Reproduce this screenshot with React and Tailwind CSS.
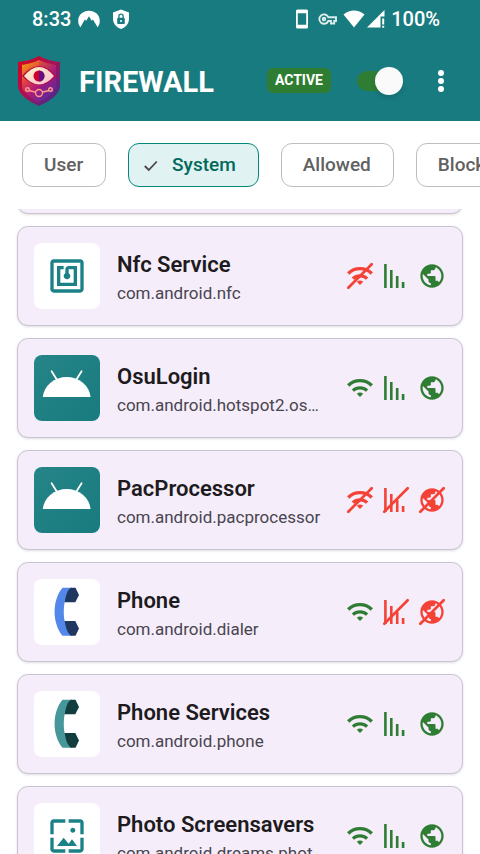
import { useState } from "react";

const APPS = [
  { name: "Nfc Service", pkg: "com.android.nfc", icon: "nfc", wifi: false, data: true, net: true },
  { name: "OsuLogin", pkg: "com.android.hotspot2.osulogin", icon: "android", wifi: true, data: true, net: true },
  { name: "PacProcessor", pkg: "com.android.pacprocessor", icon: "android", wifi: false, data: false, net: false },
  { name: "Phone", pkg: "com.android.dialer", icon: "dialer", wifi: true, data: false, net: false },
  { name: "Phone Services", pkg: "com.android.phone", icon: "phone", wifi: true, data: true, net: true },
  { name: "Photo Screensavers", pkg: "com.android.dreams.phototable", icon: "photo", wifi: true, data: true, net: true },
];

function StatusBar() {
  return (
    <div className="flex h-10 items-center justify-between pr-10 pb-0.5 pl-8 text-[20px] leading-6 font-medium">
      <div className="flex items-center gap-1.5">
        <span>8:33</span>
        <svg className="h-6 w-6" viewBox="0 0 24 24" fill="currentColor" aria-hidden="true">
          <path d="M3.4 20.2C1.9 18.3 1.2 16.2 1.2 14 1.2 8 6 3.8 12 3.8S22.800 8 22.800 14c0 2.200-.7 4.300-2.200 6.200L15.900 12.500l-1.200 1.200.6 1.100L12 9.200 9.100 14l-1.100-1.700z" />
        </svg>
        <svg className="ml-1 h-6 w-5" viewBox="0 0 20 24" aria-hidden="true">
          <path fill="currentColor" d="M10 2.500 18 5.500v6.300c0 4.900-3.400 8.700-8 10.200-4.600-1.500-8-5.300-8-10.200V5.500z" />
          <rect x="6.200" y="10.800" width="7.600" height="6.200" rx="1" fill="#187b7f" />
          <path d="M7.900 11V9.200a2.100 2.100 0 0 1 4.200 0V11" fill="none" stroke="#187b7f" strokeWidth="1.300" />
          <circle cx="10" cy="13.900" r="1" fill="currentColor" />
        </svg>
      </div>
      <div className="flex items-center">
        <svg className="h-6 w-4" viewBox="0 0 16 24" fill="currentColor" fillRule="evenodd" aria-hidden="true">
          <path d="M3.500 2.500h9q1.500 0 1.500 1.500v16q0 1.500-1.500 1.500h-9Q2 21.500 2 20V4q0-1.500 1.500-1.500zM3.800 6.200v11.600h8.400V6.200z" />
        </svg>
        <svg className="ml-2 h-6 w-5" viewBox="0 0 20 24" fill="none" stroke="currentColor" strokeWidth="1.900" strokeOpacity=".85" aria-hidden="true">
          <path d="M10.300 10.200A4.700 4.700 0 1 0 10.300 14H13v2.500h3.200V14H18v-3.800z" />
          <circle cx="6" cy="12.100" r="1.300" />
        </svg>
        <svg className="ml-1 h-6 w-6" viewBox="0 0 24 24" fill="currentColor" aria-hidden="true">
          <path d="M1.500 7.500C7.700 2.200 16.300 2.200 22.500 7.500L12 20.500z" />
        </svg>
        <svg className="h-6 w-5" viewBox="0 0 20 24" fill="currentColor" aria-hidden="true">
          <path d="M18.500 3v6.500h-4V20.500H1zM16.200 11.500h2v6h-2zM16.200 18.800h2v2h-2z" />
        </svg>
        <span className="ml-[5px]">100%</span>
      </div>
    </div>
  );
}

function Logo() {
  return (
    <svg className="h-[50px] w-11 shrink-0" viewBox="0 0 44 50" aria-hidden="true">
      <defs>
        <linearGradient id="rim" x1="0" y1="0" x2="1" y2="1">
          <stop offset="0" stopColor="#d8001c" />
          <stop offset=".45" stopColor="#b01050" />
          <stop offset="1" stopColor="#30309a" />
        </linearGradient>
        <linearGradient id="face" x1=".1" y1="0" x2=".8" y2="1">
          <stop offset="0" stopColor="#f0a010" />
          <stop offset=".3" stopColor="#e8483c" />
          <stop offset=".6" stopColor="#b01878" />
          <stop offset="1" stopColor="#5430a8" />
        </linearGradient>
        <linearGradient id="eye" x1="0" y1="0" x2="1" y2="1">
          <stop offset="0" stopColor="#fff3c4" />
          <stop offset="1" stopColor="#f4c0d4" />
        </linearGradient>
      </defs>
      <path fill="url(#rim)" d="M22 0C15 4 8 5 1 6v24c0 9 12 16 21 20 9-4 21-11 21-20V6C36 5 29 4 22 0z" />
      <path fill="url(#face)" d="M22 4C16 7 10 8 5 9v21c0 6 9 12 17 16 8-4 17-10 17-16V9C34 8 28 7 22 4z" />
      <path fill="#4a2098" opacity=".15" d="M22 4v42c8-4 17-10 17-16V9C34 8 28 7 22 4z" />
      <path fill="#b80c40" d="M5 20Q22 0 39 20Q22 38 5 20z" />
      <path fill="url(#eye)" d="M7 20Q22 2 37 20Q22 37 7 20z" />
      <circle cx="22" cy="20" r="5.500" fill="#d0002c" />
      <path d="M22 14.500a5.500 5.500 0 0 1 0 11z" fill="#641080" />
      <g fill="none" stroke="#ff9a88" strokeWidth="1.400">
        <circle cx="22" cy="37" r="3.500" />
        <circle cx="10.500" cy="33.500" r="1.800" />
        <circle cx="33.500" cy="33.500" r="1.800" />
        <path d="M12 34.500l6 1.500M32 34.500L26 36" />
      </g>
    </svg>
  );
}

function Header() {
  const [on, setOn] = useState(true);
  return (
    <header className="shrink-0 bg-[#187b7f] text-white">
      <StatusBar />
      <div className="flex h-[81px] items-center pr-[29px] pl-[17px]">
        <Logo />
        <h1 className="ml-[18px] pt-0.5 text-[29px] leading-8 font-bold">FIREWALL</h1>
        <span className="ml-auto rounded-md bg-[#2e7d32] px-2 text-[14px] leading-[25px] font-bold">ACTIVE</span>
        <label className="relative ml-6 flex h-7 w-12 items-center">
          <input
            type="checkbox"
            role="switch"
            aria-label="Firewall"
            checked={on}
            onChange={(e) => setOn(e.target.checked)}
            className="peer ml-0.5 h-5 w-10 appearance-none rounded-full bg-gray-500 checked:bg-[#2e7d32]"
          />
          <span className="pointer-events-none absolute left-0 h-7 w-7 rounded-full bg-[#fafafa] shadow-md peer-checked:left-5" />
        </label>
        <button type="button" aria-label="More options" className="ml-7 flex w-5 justify-center">
          <svg className="h-6 w-2" viewBox="0 0 8 24" fill="currentColor" aria-hidden="true">
            <circle cx="4" cy="4" r="3" />
            <circle cx="4" cy="12" r="3" />
            <circle cx="4" cy="20" r="3" />
          </svg>
        </button>
      </div>
    </header>
  );
}

function Chips() {
  const [active, setActive] = useState("System");
  return (
    <nav className="flex shrink-0 gap-[22px] overflow-hidden px-[22px] pt-[22px] pb-[22px]">
      {["User", "System", "Allowed", "Blocked"].map((label) => {
        const on = label === active;
        return (
          <button
            key={label}
            type="button"
            aria-pressed={on}
            onClick={() => setActive(label)}
            className={
              "flex h-11 shrink-0 items-center rounded-[11px] border pr-[22px] text-[19px] leading-6 font-medium " +
              (on
                ? "border-[#00897b] bg-[#e0f2f1] pl-3 text-[#00695c]"
                : "border-[#bdbdbd] bg-white pl-[21px] text-[#616161]")
            }
          >
            {on && (
              <svg className="mr-[11px] h-5 w-5" viewBox="0 0 20 20" fill="none" stroke="#49454f" strokeWidth="1.800" aria-hidden="true">
                <path d="M3.800 11l4 4L15.800 6.500" />
              </svg>
            )}
            {label}
          </button>
        );
      })}
    </nav>
  );
}

const NFC =
  "M20 2H4c-1.100 0-2 .9-2 2v16c0 1.100.9 2 2 2h16c1.100 0 2-.9 2-2V4c0-1.100-.9-2-2-2zm0 18H4V4h16v16zM18 6h-5c-1.100 0-2 .9-2 2v2.280c-.6.350-1 .980-1 1.720 0 1.100.9 2 2 2s2-.9 2-2c0-.740-.4-1.380-1-1.720V8h3v8H8V8h2V6H6v12h12V6z";
const PHOTO =
  "M4 4h7V2H4c-1.100 0-2 .9-2 2v7h2V4zm6 9l-4 5h12l-3-4-2.030 2.710L10 13zm7-4.500c0-.830-.670-1.500-1.500-1.500S14 7.670 14 8.500s.670 1.500 1.500 1.500S17 9.330 17 8.500zM20 2h-7v2h7v7h2V4c0-1.100-.9-2-2-2zm0 18h-7v2h7c1.100 0 2-.9 2-2v-7h-2v7zM4 13H2v7c0 1.100.9 2 2 2h7v-2H4v-7z";
const GLOBE =
  "M12 2C6.480 2 2 6.480 2 12s4.480 10 10 10 10-4.480 10-10S17.520 2 12 2zm-1 17.930c-3.950-.490-7-3.850-7-7.930 0-.620.080-1.210.210-1.790L9 15v1c0 1.100.9 2 2 2v1.930zm6.900-2.540c-.260-.810-1-1.390-1.900-1.390h-1v-3c0-.550-.450-1-1-1H8v-2h2c.550 0 1-.450 1-1V7h2c1.100 0 2-.9 2-2v-.410c2.930 1.190 5 4.060 5 7.410 0 2.080-.8 3.970-2.100 5.390z";

function Handset({ light, dark }) {
  const end = "M37 8.700H41.500L45 16L41.300 23.300H30.700C31.500 18 33 11 37 8.700z";
  return (
    <svg className="h-full w-full" viewBox="0 0 66 66" aria-hidden="true">
      <path fill={light} d="M28.500 8.700H38L30.700 23.300C29.500 28 29.500 37 30.700 42L38 56.700H28.500C18 44 18 21 28.500 8.700z" />
      <path fill={dark} d={end} />
      <path fill={dark} d={end} transform="matrix(1 0 0 -1 0 65.400)" />
    </svg>
  );
}

function AppIcon({ kind }) {
  if (kind === "android") {
    return (
      <div className="size-[66px] shrink-0 overflow-hidden rounded-lg bg-linear-to-br from-[#258589] to-[#187b7d]">
        <svg className="h-full w-full" viewBox="0 0 66 66" aria-hidden="true">
          <path fill="#fff" d="M8.800 42A24 22 0 0 1 56.600 42z" />
          <path stroke="#fff" strokeWidth="1.800" strokeLinecap="round" d="M17.600 16.200l5 8M47.600 16.200l-5 8" />
        </svg>
      </div>
    );
  }
  return (
    <div className="flex size-[66px] shrink-0 items-center justify-center rounded-lg bg-white">
      {kind === "dialer" && <Handset light="#5388ea" dark="#20375f" />}
      {kind === "phone" && <Handset light="#46969a" dark="#123d3f" />}
      {(kind === "nfc" || kind === "photo") && (
        <svg className="size-10" viewBox="0 0 24 24" fill="#1b8186" aria-hidden="true">
          <path d={kind === "nfc" ? NFC : PHOTO} />
        </svg>
      )}
    </div>
  );
}

function Access({ label, allowed, children }) {
  return (
    <button
      type="button"
      aria-label={label}
      aria-pressed={allowed}
      className={allowed ? "text-[#2e7d32]" : "text-[#f44336]"}
    >
      <svg className="size-7" viewBox="0 0 28 28" fill="currentColor" aria-hidden="true">
        {children}
        {!allowed && <path d="M2.300 25.700L25.700 2.300" stroke="currentColor" strokeWidth="2.700" strokeLinecap="round" />}
      </svg>
    </button>
  );
}

function AppCard({ app }) {
  return (
    <li className="flex items-center gap-[17px] rounded-[11px] border border-[#c9c4d0] bg-[#f5edfa] p-4 shadow-sm">
      <AppIcon kind={app.icon} />
      <div className="min-w-0 flex-1 pt-1.5 pr-1">
        <h2 className="truncate text-[22px] leading-7 font-semibold text-[#1d1b20]">{app.name}</h2>
        <p className="truncate text-[17px] leading-7 text-[#49454f]">{app.pkg}</p>
      </div>
      <div className="flex shrink-0 gap-2">
        <Access label="Wi-Fi" allowed={app.wifi}>
          <g fill="none" stroke="currentColor" strokeWidth="3.200">
            <path d="M2.200 11.500A16.700 16.700 0 0 1 25.800 11.500" />
            <path d="M6.900 16.700A10.200 10.200 0 0 1 21.100 16.700" />
          </g>
          <path d="M10.800 19.800Q14 17.200 17.200 19.800L14 23z" />
        </Access>
        <Access label="Mobile data" allowed={app.data}>
          <path d="M2.100 2.100h2.600v23.800H2.100zM8 8h2.600v17.900H8zM13.900 14h2.600v11.900h-2.600zM19.800 20h2.600v5.900h-2.600z" />
        </Access>
        <Access label="Internet" allowed={app.net}>
          <path d={GLOBE} transform="scale(1.1667)" />
        </Access>
      </div>
    </li>
  );
}

export default function App() {
  return (
    <div className="flex h-screen flex-col overflow-hidden bg-white font-['Roboto',sans-serif]">
      <Header />
      <Chips />
      <main className="min-h-0 flex-1 overflow-hidden">
        <ul className="-mt-[95px] flex flex-col gap-3 px-[17px]">
          <li aria-hidden="true" className="h-[100px] rounded-[11px] border border-[#c9c4d0] bg-[#f5edfa] shadow-sm" />
          {APPS.map((app) => (
            <AppCard key={app.name} app={app} />
          ))}
        </ul>
      </main>
    </div>
  );
}
